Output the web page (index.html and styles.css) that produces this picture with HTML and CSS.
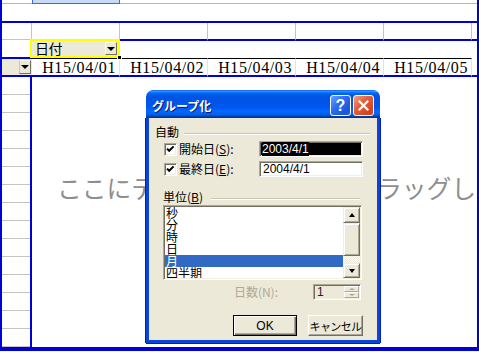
FILE: index.html
```html
<!DOCTYPE html>
<html lang="ja">
<head>
<meta charset="utf-8">
<title>グループ化</title>
<link rel="stylesheet" href="styles.css">
</head>
<body>
<div class="sheet">
  <div class="row r1">
    <div class="c c0"></div>
    <div class="c c1"></div>
    <div class="c crest"></div>
  </div>
  <div class="r2"></div>
  <div class="row r3">
    <div class="c c0"></div>
    <div class="c c1"></div>
    <div class="c"></div>
    <div class="c"></div>
    <div class="c"></div>
    <div class="c"></div>
    <div class="c c6"></div>
  </div>
  <div class="row r4">
    <div class="c c0"></div>
    <div class="c field">
      <span class="field-name">日付</span>
      <span class="dd-btn"><span class="tri"></span></span>
      <span class="handle"></span>
    </div>
    <div class="c crest"></div>
  </div>
  <div class="row r5">
    <div class="c c0"><span class="dd-btn small"><span class="tri"></span></span></div>
    <div class="c date">H15/04/01</div>
    <div class="c date">H15/04/02</div>
    <div class="c date">H15/04/03</div>
    <div class="c date">H15/04/04</div>
    <div class="c date">H15/04/05</div>
    <div class="c c6"></div>
  </div>
  <div class="body">
    <div class="rowheads">
      <div class="rh"></div><div class="rh"></div><div class="rh"></div><div class="rh"></div><div class="rh"></div>
      <div class="rh"></div><div class="rh"></div><div class="rh"></div><div class="rh"></div><div class="rh"></div>
      <div class="rh"></div><div class="rh"></div><div class="rh"></div><div class="rh"></div><div class="rh"></div>
    </div>
    <div class="data-area">
      <div class="watermark">ここにデータ　アイテムをドラッグします</div>
    </div>
  </div>

  <div class="dlg">
    <div class="titlebar">
      <span class="title">グループ化</span>
      <span class="tb-btn help">?</span>
      <span class="tb-btn close">
        <svg width="11" height="11" viewBox="0 0 11 11"><path d="M1.5 1.5 L9.5 9.5 M9.5 1.5 L1.5 9.5" stroke="#fff" stroke-width="2.2" stroke-linecap="square"/></svg>
      </span>
    </div>
    <div class="dlg-body">
      <div class="grp-head h1"><span>自動</span><span class="etch"></span></div>
      <div class="chk-row first">
        <span class="chk"><svg width="9" height="9" viewBox="0 0 9 9"><path d="M1 3.6 L3.2 5.8 L7.6 1.4" fill="none" stroke="#000" stroke-width="2"/></svg></span>
        <span class="chk-label">開始日(<u>S</u>):</span>
        <span class="edit selected"><span class="sel">2003/4/1</span></span>
      </div>
      <div class="chk-row second">
        <span class="chk"><svg width="9" height="9" viewBox="0 0 9 9"><path d="M1 3.6 L3.2 5.8 L7.6 1.4" fill="none" stroke="#000" stroke-width="2"/></svg></span>
        <span class="chk-label">最終日(<u>E</u>):</span>
        <span class="edit">2004/4/1</span>
      </div>
      <div class="grp-head h2"><span>単位(<u>B</u>)</span><span class="etch"></span></div>
      <div class="listbox">
        <div class="items">
          <div class="item">秒</div>
          <div class="item">分</div>
          <div class="item">時</div>
          <div class="item">日</div>
          <div class="item on">月</div>
          <div class="item">四半期</div>
        </div>
        <div class="vscroll">
          <span class="sb-btn up"><span class="tri up"></span></span>
          <span class="sb-thumb"></span>
          <span class="sb-track"></span>
          <span class="sb-btn down"><span class="tri"></span></span>
        </div>
      </div>
      <div class="days-row">
        <span class="days-label">日数(N):</span>
        <span class="spin">
          <span class="spin-val">1</span>
          <span class="spin-btns">
            <span class="spin-b"><span class="tri up dis"></span></span>
            <span class="spin-b"><span class="tri dis"></span></span>
          </span>
        </span>
      </div>
      <div class="btn-row">
        <span class="btn default"><span>OK</span></span>
        <span class="btn cancel">キャンセル</span>
      </div>
    </div>
  </div>
</div>
</body>
</html>
```
FILE: styles.css
```css
* { box-sizing: border-box; margin: 0; padding: 0; }
html, body { background: #fff; }
body {
  width: 479px; height: 352px; overflow: hidden;
  font-family: "Noto Sans CJK JP", "Noto Sans", sans-serif;
  font-size: 12px; color: #000;
}
.sheet {
  position: relative;
  width: 479px; height: 351px;
  border-left: 2px solid #0000d8;
  border-right: 2px solid #0000d8;
  border-bottom: 4px solid #0000d8;
  overflow: hidden;
  display: flex; flex-direction: column;
}
.row { display: grid; grid-template-columns: 30px repeat(5, 88px) 1fr; }

/* row 1: column header remnant */
.r1 .c { height: 4px; border-bottom: 1px solid #b9b5a8; }
.r1 .c1 { background: #c7d9f6; border: 1px solid #3a6fd8; border-top: 0; }
.r1 .crest { grid-column: 3 / -1; }

.r2 { height: 19px; border-bottom: 2px solid #0000d8; }

/* row 3 */
.r3 .c { height: 18px; border-right: 1px solid #c4c4c4; border-bottom: 2px solid #0000d8; }
.r3 .c0 { height: 17px; border-bottom: 1px solid #c4c4c4; }
.r3 .c1 { margin-left: -2px; border-bottom: 2px solid #ffff00; }
.r3 .c6 { border-right: 0; }

/* row 4 : page field */
.r4 .c { height: 17px; }
.r4 .c0 { border-bottom: 1px solid #0000d8; }
.r4 .crest { grid-column: 3 / -1; }
.field {
  position: relative;
  margin-left: -2px;
  background: #ece9d8;
  border-left: 2px solid #ffff00;
  border-right: 2px solid #ffff00;
  border-bottom: 2px solid #ffff00;
  display: flex; align-items: center;
  padding-left: 3px; padding-right: 1px;
}
.field-name { font-size: 14px; line-height: 15px; letter-spacing: -0.5px; }
.dd-btn {
  margin-left: auto;
  width: 12px; height: 13px;
  background: #ece9d8;
  border-top: 1px solid #fff; border-left: 1px solid #fff;
  border-right: 1px solid #716f64; border-bottom: 1px solid #716f64;
  display: flex; align-items: center; justify-content: center;
}
.tri { width: 0; height: 0; border-left: 4px solid transparent; border-right: 4px solid transparent; border-top: 4px solid #000; }
.tri.up { border-top: 0; border-bottom: 4px solid #000; }
.handle { position: absolute; right: -4px; bottom: -4px; width: 5px; height: 5px; background: #000; border: 1px solid #fff; }

/* row 5 : column labels */
.r5 .c {
  height: 19px;
  border-top: 1px solid #000;
  border-bottom: 2px solid #0000d8;
}
.r5 .c0 {
  background: #ece9d8; border-top: 1px solid #0000d8;
  display: flex; align-items: center; padding-right: 1px;
}
.dd-btn.small { width: 12px; height: 14px; border-left: 1px solid #c8c5b5; }
.r5 .c6 { border-top-color: #fff; }
.date {
  font-family: "Liberation Serif", serif;
  font-size: 16px; line-height: 16px; letter-spacing: 0.6px;
  text-align: right; padding-right: 3px; padding-top: 1px;
  border-right: 1px solid #e2e2e2;
}

/* body */
.body { display: flex; flex: 1; min-height: 0; }
.rowheads { width: 30px; flex: none; border-right: 2px solid #0000d8; overflow: hidden; }
.rh { height: 18px; border-bottom: 1px solid #c4c4c4; }
.data-area { flex: 1; overflow: hidden; padding-left: 25px; }
.watermark {
  margin-top: 98px;
  white-space: nowrap;
  font-size: 24.8px; line-height: 25px;
  color: #8e8e8e;
}

/* dialog */
.dlg {
  position: absolute; left: 144px; top: 90px;
  width: 234px; height: 253px;
}
.titlebar {
  height: 28px;
  border-radius: 7px 7px 0 0;
  background: linear-gradient(to bottom, #0058ee 0%, #3593ff 4%, #288eff 6%, #127dff 8%, #036ffc 10%, #0262ee 14%, #0057e5 20%, #0054e3 24%, #0055eb 56%, #005bf5 66%, #026afe 76%, #0062ef 86%, #0052d6 92%, #0040ab 94%, #003092 100%);
  display: flex; align-items: flex-start;
  padding: 5px 6px 0 6px;
}
.title {
  color: #fff; font-weight: bold; font-size: 12px; line-height: 22px;
  text-shadow: 1px 1px #0a1e80;
}
.tb-btn {
  width: 21px; height: 21px;
  border: 1px solid #fff; border-radius: 3px;
  display: flex; align-items: center; justify-content: center;
}
.help {
  margin-left: auto; margin-right: 2px;
  background: linear-gradient(135deg, #6aa2ff 0%, #2d6ff0 40%, #1a55dc 80%, #2b62e0 100%);
  color: #fff; font-family: "Liberation Sans", sans-serif; font-weight: bold; font-size: 16px; line-height: 19px;
}
.close { background: linear-gradient(135deg, #f3a184 0%, #e2603c 40%, #d24620 80%, #c94422 100%); }

.dlg-body {
  height: 225px;
  background: #ece9d8;
  border: 3px solid #0a45d8;
  border-top: 0;
  box-shadow: -1px 0 0 #0020b0, 1px 0 0 #0020b0, 0 1px 0 #0020b0;
  display: flex; flex-direction: column;
}
.grp-head { display: flex; align-items: flex-start; line-height: 14px; height: 14px; }
.h1 { margin-top: 7px; padding-left: 6px; padding-right: 7px; }
.h2 { margin-top: 13px; padding-left: 14px; padding-right: 17px; }
.etch { flex: 1; margin-top: 8px; margin-left: 5px; border-top: 1px solid #cbc7b8; border-bottom: 1px solid #fff; }
.h2 .etch { margin-left: 8px; }

.chk-row { display: flex; align-items: center; height: 16px; padding-left: 15px; padding-right: 14px; }
.chk-row.first { margin-top: 2px; }
.chk-row.second { margin-top: 4px; }
.chk {
  width: 13px; height: 13px; background: #fff;
  border-top: 1px solid #aca899; border-left: 1px solid #aca899;
  border-right: 1px solid #fff; border-bottom: 1px solid #fff;
  box-shadow: inset 1px 1px 0 #716f64, inset -1px -1px 0 #f1efe2;
  display: flex; align-items: center; justify-content: center;
}
.chk svg { display: block; }
.chk-label { margin-left: 2px; line-height: 14px; }
.edit {
  margin-left: auto;
  width: 104px; height: 16px;
  background: #fff;
  border-top: 1px solid #aca899; border-left: 1px solid #aca899;
  border-right: 1px solid #fff; border-bottom: 1px solid #fff;
  box-shadow: inset 1px 1px 0 #716f64, inset -1px -1px 0 #f1efe2;
  font-family: "Liberation Sans", sans-serif; font-size: 12px; line-height: 14px;
  padding: 0 2px 0 3px;
  display: flex; align-items: center;
}
.edit.selected { background: #000; padding-left: 2px; }
.sel { color: #fff; background: #000; }

.listbox {
  margin: 1px 15px 0 14px;
  height: 75px;
  background: #fff;
  border-top: 1px solid #aca899; border-left: 1px solid #aca899;
  border-right: 1px solid #fff; border-bottom: 1px solid #fff;
  box-shadow: inset 1px 1px 0 #716f64, inset -1px -1px 0 #f1efe2;
  padding: 1px;
  display: flex;
}
.items { flex: 1; overflow: hidden; }
.item { height: 12px; line-height: 12px; font-size: 12px; padding-left: 1px; white-space: nowrap; }
.item.on { background: #316ac5; color: #fff; }
.vscroll { width: 17px; display: flex; flex-direction: column; }
.sb-btn, .sb-thumb {
  background: #ece9d8;
  border-top: 1px solid #f1efe2; border-left: 1px solid #f1efe2;
  border-right: 1px solid #716f64; border-bottom: 1px solid #716f64;
  box-shadow: inset 1px 1px 0 #fff, inset -1px -1px 0 #aca899;
  display: flex; align-items: center; justify-content: center;
}
.sb-btn.up { height: 16px; }
.sb-thumb { height: 33px; }
.sb-track {
  height: 7px;
  background-color: #fff;
  background-image: repeating-conic-gradient(#ece9d8 0 25%, #fff 0 50%);
  background-size: 2px 2px;
}
.sb-btn.down { height: 15px; }
.sb-btn .tri { border-left-width: 3.5px; border-right-width: 3.5px; }

.days-row { margin-top: 4px; height: 16px; display: flex; align-items: center; justify-content: flex-end; padding-right: 16px; }
.days-label { color: #aca899; line-height: 14px; margin-right: 35px; }
.spin {
  width: 48px; height: 16px;
  background: #ece9d8;
  border-top: 1px solid #aca899; border-left: 1px solid #aca899;
  border-right: 1px solid #fff; border-bottom: 1px solid #fff;
  box-shadow: inset 1px 1px 0 #716f64, inset -1px -1px 0 #f1efe2;
  display: flex; padding: 1px 1px 1px 3px;
}
.spin-val { flex: 1; font-family: "Liberation Sans", sans-serif; font-size: 12px; line-height: 13px; color: #222; }
.spin-btns { width: 15px; display: flex; flex-direction: column; }
.spin-b {
  flex: 1; background: #ece9d8;
  border-top: 1px solid #fff; border-left: 1px solid #fff;
  border-right: 1px solid #aca899; border-bottom: 1px solid #aca899;
  display: flex; align-items: center; justify-content: center;
}
.tri.dis { border-left-width: 3px; border-right-width: 3px; border-top-width: 2px; border-top-color: #aca899; }
.tri.up.dis { border-top-width: 0; border-bottom-width: 2px; border-bottom-color: #aca899; }

.btn-row { margin-top: 15px; display: flex; justify-content: flex-end; gap: 11px; padding-right: 14px; }
.btn {
  height: 21px; width: 55px;
  background: #ece9d8;
  border-top: 1px solid #fff; border-left: 1px solid #fff;
  border-right: 1px solid #716f64; border-bottom: 1px solid #716f64;
  box-shadow: inset -1px -1px 0 #aca899;
  display: flex; align-items: center; justify-content: center;
  line-height: 14px; font-size: 12px; white-space: nowrap;
}
.btn.cancel { font-size: 11px; letter-spacing: -0.6px; }
.btn.default {
  width: 64px;
  border: 1px solid #000;
  box-shadow: inset 1px 1px 0 #fff, inset -1px -1px 0 #716f64, inset -2px -2px 0 #aca899;
  font-family: "Liberation Sans", sans-serif; font-size: 12px;
}
```
